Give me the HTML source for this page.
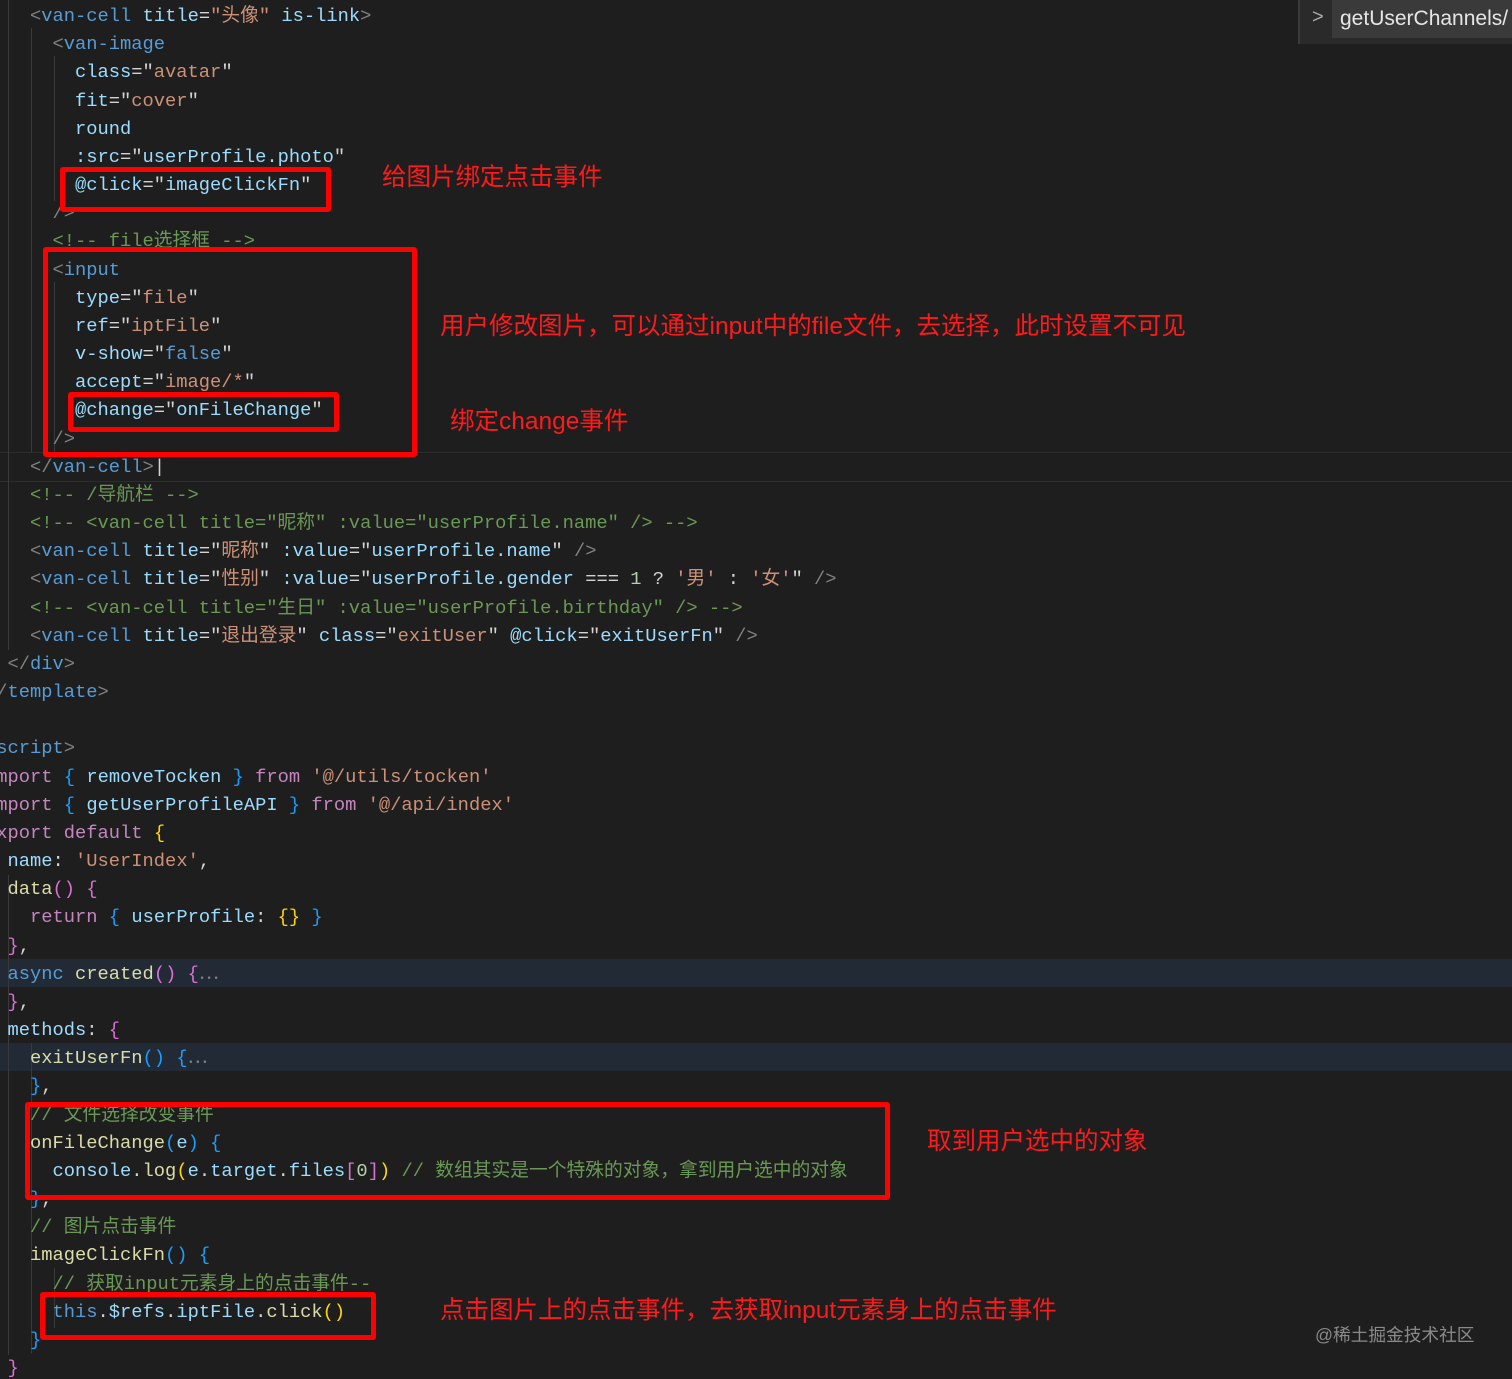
<!DOCTYPE html>
<html><head><meta charset="utf-8"><style>
html,body{margin:0;padding:0;background:#1e1e1e;width:1512px;height:1379px;overflow:hidden;position:relative}
#c{position:absolute;left:0;top:2px;width:1512px;height:1379px}
.l{position:absolute;left:-15px;height:28.17px;line-height:28.17px;white-space:pre;font-family:"Liberation Mono","Noto Sans CJK SC",monospace;font-size:18.75px;color:#d4d4d4}
.t{color:#808080}.n{color:#569cd6}.a{color:#9cdcfe}.s{color:#ce9178}.c{color:#6a9955}.k{color:#c586c0}.f{color:#dcdcaa}.y{color:#ffd700}.p{color:#da70d6}.b{color:#179fff}.m{color:#b5cea8}
.hl{position:absolute;left:0;width:1512px;height:28px;background:#222a35}
.g{position:absolute;width:1px;background:#3a3a3a}
.box{position:absolute;border:5px solid #ff0000;border-radius:3px;box-sizing:border-box}
.r{position:absolute;color:#ff1a1a;font-family:"Liberation Sans","Noto Sans CJK SC",sans-serif;font-size:24.5px;white-space:nowrap;line-height:28px}
</style></head><body>
<div class="hl" style="top:959px"></div>
<div class="hl" style="top:1043px"></div>
<div style="position:absolute;left:0;top:452px;width:1512px;height:28px;border-top:1px solid #2c2c2c;border-bottom:1px solid #2c2c2c"></div>
<div class="g" style="left:8px;top:0;height:650px"></div>
<div class="g" style="left:31px;top:28px;height:424px"></div>
<div class="g" style="left:54px;top:56px;height:145px"></div>
<div class="g" style="left:54px;top:282px;height:170px"></div>
<div class="g" style="left:8px;top:875px;height:480px"></div>
<div class="g" style="left:31px;top:1043px;height:310px"></div>
<div class="g" style="left:54px;top:1268px;height:60px"></div>
<div id="c">
<div class="l" style="top:0px">    <span class="t">&lt;</span><span class="n">van-cell</span> <span class="a">title</span>=<span class="s">"头像"</span> <span class="a">is-link</span><span class="t">&gt;</span></div>
<div class="l" style="top:28.17px">      <span class="t">&lt;</span><span class="n">van-image</span></div>
<div class="l" style="top:56.34px">        <span class="a">class</span>="<span class="s">avatar</span>"</div>
<div class="l" style="top:84.51px">        <span class="a">fit</span>="<span class="s">cover</span>"</div>
<div class="l" style="top:112.68px">        <span class="a">round</span></div>
<div class="l" style="top:140.85px">        <span class="a">:src</span>="<span class="a">userProfile.photo</span>"</div>
<div class="l" style="top:169.02px">        <span class="a">@click</span>="<span class="a">imageClickFn</span>"</div>
<div class="l" style="top:197.19px">      <span class="t">/&gt;</span></div>
<div class="l" style="top:225.36px">      <span class="c">&lt;!-- file选择框 --&gt;</span></div>
<div class="l" style="top:253.53px">      <span class="t">&lt;</span><span class="n">input</span></div>
<div class="l" style="top:281.7px">        <span class="a">type</span>="<span class="s">file</span>"</div>
<div class="l" style="top:309.87px">        <span class="a">ref</span>="<span class="s">iptFile</span>"</div>
<div class="l" style="top:338.04px">        <span class="a">v-show</span>="<span class="n">false</span>"</div>
<div class="l" style="top:366.21px">        <span class="a">accept</span>="<span class="s">image/*</span>"</div>
<div class="l" style="top:394.38px">        <span class="a">@change</span>="<span class="a">onFileChange</span>"</div>
<div class="l" style="top:422.55px">      <span class="t">/&gt;</span></div>
<div class="l" style="top:450.72px">    <span class="t">&lt;/</span><span class="n">van-cell</span><span class="t">&gt;</span>|</div>
<div class="l" style="top:478.89px">    <span class="c">&lt;!-- /导航栏 --&gt;</span></div>
<div class="l" style="top:507.06px">    <span class="c">&lt;!-- &lt;van-cell title="昵称" :value="userProfile.name" /&gt; --&gt;</span></div>
<div class="l" style="top:535.23px">    <span class="t">&lt;</span><span class="n">van-cell</span> <span class="a">title</span>="<span class="s">昵称</span>" <span class="a">:value</span>="<span class="a">userProfile.name</span>" <span class="t">/&gt;</span></div>
<div class="l" style="top:563.4px">    <span class="t">&lt;</span><span class="n">van-cell</span> <span class="a">title</span>="<span class="s">性别</span>" <span class="a">:value</span>="<span class="a">userProfile.gender</span> === <span class="m">1</span> ? <span class="s">'男'</span> : <span class="s">'女'</span>" <span class="t">/&gt;</span></div>
<div class="l" style="top:591.57px">    <span class="c">&lt;!-- &lt;van-cell title="生日" :value="userProfile.birthday" /&gt; --&gt;</span></div>
<div class="l" style="top:619.74px">    <span class="t">&lt;</span><span class="n">van-cell</span> <span class="a">title</span>="<span class="s">退出登录</span>" <span class="a">class</span>="<span class="s">exitUser</span>" <span class="a">@click</span>="<span class="a">exitUserFn</span>" <span class="t">/&gt;</span></div>
<div class="l" style="top:647.91px">  <span class="t">&lt;/</span><span class="n">div</span><span class="t">&gt;</span></div>
<div class="l" style="top:676.08px"><span class="t">&lt;/</span><span class="n">template</span><span class="t">&gt;</span></div>
<div class="l" style="top:732.42px"><span class="t">&lt;</span><span class="n">script</span><span class="t">&gt;</span></div>
<div class="l" style="top:760.59px"><span class="k">import</span> <span class="b">{</span> <span class="a">removeTocken</span> <span class="b">}</span> <span class="k">from</span> <span class="s">'@/utils/tocken'</span></div>
<div class="l" style="top:788.76px"><span class="k">import</span> <span class="b">{</span> <span class="a">getUserProfileAPI</span> <span class="b">}</span> <span class="k">from</span> <span class="s">'@/api/index'</span></div>
<div class="l" style="top:816.93px"><span class="k">export</span> <span class="k">default</span> <span class="y">{</span></div>
<div class="l" style="top:845.1px">  <span class="a">name</span>: <span class="s">'UserIndex'</span>,</div>
<div class="l" style="top:873.27px">  <span class="f">data</span><span class="p">()</span> <span class="p">{</span></div>
<div class="l" style="top:901.44px">    <span class="k">return</span> <span class="b">{</span> <span class="a">userProfile</span>: <span class="y">{}</span> <span class="b">}</span></div>
<div class="l" style="top:929.61px">  <span class="p">}</span>,</div>
<div class="l" style="top:957.78px">  <span class="n">async</span> <span class="f">created</span><span class="p">()</span> <span class="p">{</span><span class="t">⋯</span></div>
<div class="l" style="top:985.95px">  <span class="p">}</span>,</div>
<div class="l" style="top:1014.12px">  <span class="a">methods</span>: <span class="p">{</span></div>
<div class="l" style="top:1042.29px">    <span class="f">exitUserFn</span><span class="b">()</span> <span class="b">{</span><span class="t">⋯</span></div>
<div class="l" style="top:1070.46px">    <span class="b">}</span>,</div>
<div class="l" style="top:1098.63px">    <span class="c">// 文件选择改变事件</span></div>
<div class="l" style="top:1126.8px">    <span class="f">onFileChange</span><span class="b">(</span><span class="a">e</span><span class="b">)</span> <span class="b">{</span></div>
<div class="l" style="top:1154.97px">      <span class="a">console</span>.<span class="f">log</span><span class="y">(</span><span class="a">e</span>.<span class="a">target</span>.<span class="a">files</span><span class="p">[</span><span class="m">0</span><span class="p">]</span><span class="y">)</span> <span class="c">// 数组其实是一个特殊的对象，拿到用户选中的对象</span></div>
<div class="l" style="top:1183.14px">    <span class="b">}</span>,</div>
<div class="l" style="top:1211.31px">    <span class="c">// 图片点击事件</span></div>
<div class="l" style="top:1239.48px">    <span class="f">imageClickFn</span><span class="b">()</span> <span class="b">{</span></div>
<div class="l" style="top:1267.65px">      <span class="c">// 获取input元素身上的点击事件--</span></div>
<div class="l" style="top:1295.82px">      <span class="n">this</span>.<span class="a">$refs</span>.<span class="a">iptFile</span>.<span class="f">click</span><span class="y">()</span></div>
<div class="l" style="top:1323.99px">    <span class="b">}</span></div>
<div class="l" style="top:1352.16px">  <span class="p">}</span></div>
</div>

<div class="box" style="left:60px;top:167px;width:271px;height:45px"></div>
<div class="box" style="left:43px;top:247px;width:374px;height:210px"></div>
<div class="box" style="left:68px;top:392px;width:271px;height:40px"></div>
<div class="box" style="left:25px;top:1102px;width:865px;height:98px"></div>
<div class="box" style="left:40px;top:1292px;width:336px;height:48px"></div>

<div class="r" style="left:382px;top:164px">给图片绑定点击事件</div>
<div class="r" style="left:440px;top:313px">用户修改图片，可以通过input中的file文件，去选择，此时设置不可见</div>
<div class="r" style="left:450px;top:408px">绑定change事件</div>
<div class="r" style="left:927px;top:1128px">取到用户选中的对象</div>
<div class="r" style="left:440px;top:1297px">点击图片上的点击事件，去获取input元素身上的点击事件</div>
<div style="position:absolute;left:1315px;top:1321px;color:#8a8a8a;font-family:'Liberation Sans','Noto Sans CJK SC',sans-serif;font-size:17.7px">@稀土掘金技术社区</div>

<div style="position:absolute;left:1298px;top:0;width:214px;height:44px;background:#2a2a2a;border-left:2px solid #3a3a3a"></div>
<div style="position:absolute;left:1312px;top:6px;color:#aaa;font-family:'Liberation Sans',sans-serif;font-size:20px">&gt;</div>
<div style="position:absolute;left:1332px;top:0;width:180px;height:38px;background:#3a3a3a;color:#e6e6e6;font-family:'Liberation Sans',sans-serif;font-size:21px;line-height:38px;padding-left:8px;white-space:nowrap;overflow:hidden">getUserChannels/</div>
</body></html>
